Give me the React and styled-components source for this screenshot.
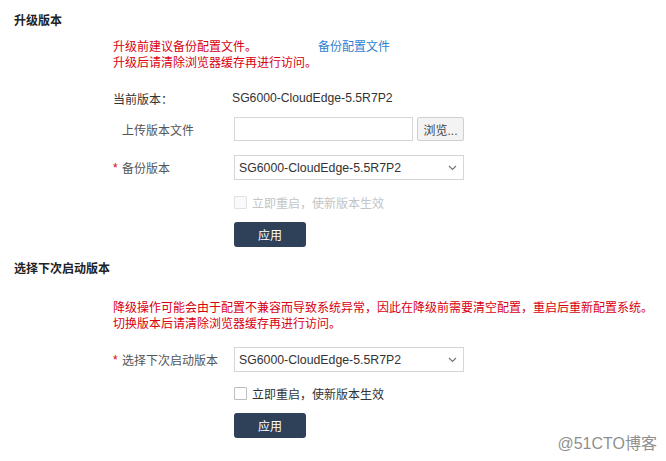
import React from "react";
import styled, { createGlobalStyle } from "styled-components";

const Global = createGlobalStyle`
  html, body { margin: 0; padding: 0; background: #fff; }
  body {
    font-family: "Liberation Sans", "Noto Sans CJK SC", Arial, sans-serif;
    font-size: 12px;
    color: #333;
  }
  * { box-sizing: border-box; }
`;

const Page = styled.div`
  position: relative;
  width: 666px;
  height: 461px;
  padding: 13px 0 0 14px;
  overflow: hidden;
`;

const SectionTitle = styled.div`
  font-weight: bold;
  font-size: 12px;
  line-height: 16px;
  color: #222;
  margin-top: ${(p) => p.$mt || 0}px;
`;

const Notice = styled.div`
  margin: ${(p) => p.$mt}px 0 0 99px;
  color: #d8000f;
  line-height: 16px;
  font-size: 12px;
`;

const NoticeLine = styled.div`
  display: flex;
  white-space: nowrap;
`;

const Link = styled.a`
  color: #2f7fd1;
  text-decoration: none;
  margin-left: 61px;
  cursor: pointer;
`;

const Row = styled.div`
  display: flex;
  align-items: center;
  margin: ${(p) => p.$mt}px 0 0 99px;
  height: ${(p) => p.$h || 24}px;
`;

const Label = styled.div`
  width: 121px;
  flex: none;
  display: flex;
  align-items: center;
  color: ${(p) => (p.$dark ? "#333" : "#555")};
  white-space: nowrap;
`;

const Star = styled.span`
  display: inline-block;
  width: 9px;
  color: #d8000f;
`;

const Value = styled.div`
  color: #333;
  margin-left: -2px;
  font-size: 12.2px;
`;

const TextInput = styled.div`
  width: 179px;
  height: 24px;
  border: 1px solid #d6d6d6;
  background: #fff;
`;

const BrowseButton = styled.button`
  margin-left: 4px;
  width: 47px;
  height: 24px;
  border: 1px solid #cfcfcf;
  background: #f3f3f3;
  border-radius: 2px;
  font: inherit;
  font-size: 12px;
  color: #444;
  padding: 0;
`;

const Select = styled.div`
  width: 230px;
  height: 25px;
  border: 1px solid #d6d6d6;
  background: #fff;
  display: flex;
  align-items: center;
  justify-content: space-between;
  padding: 0 6px 0 4px;
  color: #333;
  font-size: 12.3px;
`;

const CheckRow = styled.label`
  display: flex;
  align-items: center;
  gap: 5px;
  color: ${(p) => (p.$disabled ? "#c4c4c4" : "#333")};
  white-space: nowrap;
`;

const Box = styled.span`
  width: 13px;
  height: 13px;
  border: 1px solid ${(p) => (p.$disabled ? "#e2e2e2" : "#bdbdbd")};
  background: ${(p) => (p.$disabled ? "#fafafa" : "#fff")};
  border-radius: 1px;
`;

const ApplyButton = styled.button`
  width: 72px;
  height: 25px;
  border: none;
  border-radius: 3px;
  background: #2e4159;
  color: #fff;
  font: inherit;
  font-size: 12px;
  padding: 0;
`;

const Indent = styled.div`
  width: 121px;
  flex: none;
`;

const Watermark = styled.div`
  position: absolute;
  right: 9px;
  bottom: 7px;
  font-size: 16px;
  color: #8f8f8f;
`;

const Chevron = () => (
  <svg width="9" height="6" viewBox="0 0 9 6">
    <polyline points="1,1 4.5,4.5 8,1" fill="none" stroke="#777" strokeWidth="1.2" />
  </svg>
);

const VERSION = "SG6000-CloudEdge-5.5R7P2";

export default function App() {
  return (
    <Page>
      <Global />
      <SectionTitle>升级版本</SectionTitle>
      <Notice $mt={10}>
        <NoticeLine>
          升级前建议备份配置文件。<Link>备份配置文件</Link>
        </NoticeLine>
        <NoticeLine>升级后请清除浏览器缓存再进行访问。</NoticeLine>
      </Notice>

      <Row $mt={15}>
        <Label $dark>当前版本：</Label>
        <Value>{VERSION}</Value>
      </Row>

      <Row $mt={7}>
        <Label>
          <Star />
          上传版本文件
        </Label>
        <TextInput />
        <BrowseButton>浏览...</BrowseButton>
      </Row>

      <Row $mt={14} $h={25}>
        <Label>
          <Star>*</Star>
          备份版本
        </Label>
        <Select>
          <span>{VERSION}</span>
          <Chevron />
        </Select>
      </Row>

      <Row $mt={14} $h={16}>
        <Indent />
        <CheckRow $disabled>
          <Box $disabled />
          立即重启，使新版本生效
        </CheckRow>
      </Row>

      <Row $mt={12} $h={25}>
        <Indent />
        <ApplyButton>应用</ApplyButton>
      </Row>

      <SectionTitle $mt={14}>选择下次启动版本</SectionTitle>
      <Notice $mt={23}>
        <NoticeLine>
          降级操作可能会由于配置不兼容而导致系统异常，因此在降级前需要清空配置，重启后重新配置系统。
        </NoticeLine>
        <NoticeLine>切换版本后请清除浏览器缓存再进行访问。</NoticeLine>
      </Notice>

      <Row $mt={15} $h={25}>
        <Label>
          <Star>*</Star>
          选择下次启动版本
        </Label>
        <Select>
          <span>{VERSION}</span>
          <Chevron />
        </Select>
      </Row>

      <Row $mt={13} $h={16}>
        <Indent />
        <CheckRow>
          <Box />
          立即重启，使新版本生效
        </CheckRow>
      </Row>

      <Row $mt={12} $h={25}>
        <Indent />
        <ApplyButton>应用</ApplyButton>
      </Row>

      <Watermark>@51CTO博客</Watermark>
    </Page>
  );
}
